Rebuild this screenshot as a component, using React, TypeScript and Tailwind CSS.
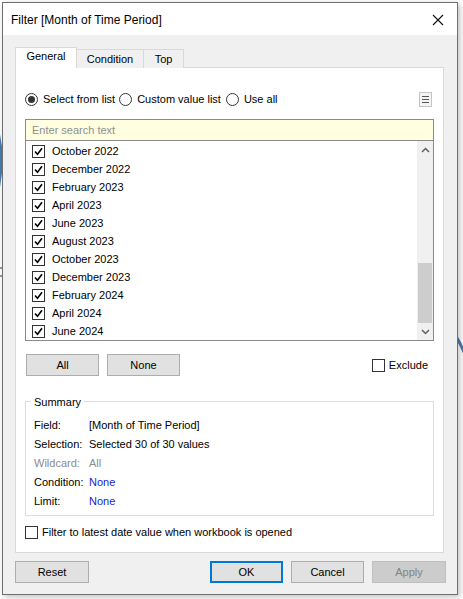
import React from "react";

const FONT = { fontFamily: '"Segoe UI", "Liberation Sans", Arial, sans-serif' };

function Check({ checked }: { checked: boolean }) {
  return (
    <span className="w-[13px] h-[13px] border border-[#333333] bg-white flex items-center justify-center shrink-0">
      {checked && (
        <svg width="11" height="11" viewBox="0 0 11 11">
          <path d="M2 5.5 L4.5 8.2 L9 2.3" fill="none" stroke="#000" strokeWidth="1.6" />
        </svg>
      )}
    </span>
  );
}

function Radio({ checked }: { checked: boolean }) {
  return (
    <span className="w-[13px] h-[13px] rounded-full border border-[#333333] bg-white flex items-center justify-center shrink-0">
      {checked && <span className="w-[7px] h-[7px] rounded-full bg-[#333333]" />}
    </span>
  );
}

const months = [
  "October 2022",
  "December 2022",
  "February 2023",
  "April 2023",
  "June 2023",
  "August 2023",
  "October 2023",
  "December 2023",
  "February 2024",
  "April 2024",
  "June 2024",
];

function Btn({ children, w, variant }: { children: React.ReactNode; w: string; variant?: "ok" | "disabled" }) {
  const cls =
    variant === "ok"
      ? "border-[#0078d7] bg-[#e1e1e1] text-black border-2"
      : variant === "disabled"
      ? "border-[#bfbfbf] bg-[#cccccc] text-[#838383] border"
      : "border-[#adadad] bg-[#e1e1e1] text-black border";
  return (
    <div className={`h-[22px] ${w} ${cls} flex items-center justify-center text-[11px]`}>{children}</div>
  );
}

export default function App() {
  return (
    <div className="w-[463px] h-[599px] bg-white relative overflow-hidden" style={FONT}>
      <svg className="absolute inset-0" width="463" height="599" viewBox="0 0 463 599">
        <path d="M-6 120 Q 6 150 -2 190" fill="none" stroke="#4a7bb0" strokeWidth="3" />
        <path d="M0 268 L3 268 L3 276 L0 276" fill="none" stroke="#333" strokeWidth="1" />
        <path d="M457 338 Q 464 350 470 368" fill="none" stroke="#4a7bb0" strokeWidth="3" />
      </svg>
      <div className="relative ml-[2px] mt-[2px] w-[456px] h-[593px] border border-[#6f6f6f] bg-[#f0f0f0] flex flex-col shadow-[2px_2px_6px_rgba(0,0,0,0.25)]">
        {/* title bar */}
        <div className="h-[32px] bg-white flex items-center justify-between pl-[8px] pr-[8px] pt-[1px] shrink-0">
          <span className="text-[12px] text-black">Filter [Month of Time Period]</span>
          <svg width="12" height="12" viewBox="0 0 12 12" className="mr-[5px]">
            <path d="M1 1 L11 11 M11 1 L1 11" stroke="#111" strokeWidth="1.1" />
          </svg>
        </div>
        {/* body */}
        <div className="pl-[12px] pr-[13px] pt-[12px] flex flex-col">
          {/* tabs */}
          <div className="flex items-end h-[21px] relative z-10 text-[11px]">
            <div className="w-[62px] h-[21px] bg-white border border-b-0 border-[#d9d9d9] flex items-center justify-center pb-[3px]">
              General
            </div>
            <div className="w-[67px] h-[19px] bg-[#f0f0f0] border border-l-0 border-[#d9d9d9] border-b-0 flex items-center justify-center">
              Condition
            </div>
            <div className="w-[40px] h-[19px] bg-[#f0f0f0] border border-l-0 border-[#d9d9d9] border-b-0 flex items-center justify-center">
              Top
            </div>
          </div>
          {/* panel */}
          <div className="-mt-px h-[486px] bg-white border border-[#d9d9d9] flex flex-col px-[9px] text-[11px] text-black">
            {/* radio row */}
            <div className="mt-[23px] h-[16px] flex items-center">
              <div className="flex items-center">
                <Radio checked />
                <span className="ml-[5px]">Select from list</span>
              </div>
              <div className="flex items-center ml-[4px]">
                <Radio checked={false} />
                <span className="ml-[5px]">Custom value list</span>
              </div>
              <div className="flex items-center ml-[5px]">
                <Radio checked={false} />
                <span className="ml-[5px]">Use all</span>
              </div>
              <div className="ml-auto mr-[2px] w-[13px] h-[15px] border border-[#c4c4c4] bg-[#f4f4f4] flex flex-col items-center justify-center gap-[2px]">
                <span className="w-[7px] h-[1px] bg-[#555]" />
                <span className="w-[7px] h-[1px] bg-[#555]" />
                <span className="w-[7px] h-[1px] bg-[#555]" />
              </div>
            </div>
            {/* search + list */}
            <div className="mt-[12px] h-[222px] border border-[#8a8a8a] flex flex-col">
              <div className="h-[21px] bg-[#fffee0] border-b border-[#8a8a8a] flex items-center pl-[6px] text-[#8f8f8f] shrink-0">
                Enter search text
              </div>
              <div className="flex flex-1">
                <div className="flex-1 flex flex-col pt-[1px]">
                  {months.map((m) => (
                    <div key={m} className="h-[18px] flex items-center pl-[6px]">
                      <Check checked />
                      <span className="ml-[7px]">{m}</span>
                    </div>
                  ))}
                </div>
                <div className="w-[16px] bg-[#f0f0f0] flex flex-col">
                  <div className="h-[17px] flex items-center justify-center">
                    <svg width="9" height="6" viewBox="0 0 9 6">
                      <path d="M1 5 L4.5 1.5 L8 5" fill="none" stroke="#606060" strokeWidth="1.5" />
                    </svg>
                  </div>
                  <div className="flex-1 flex flex-col justify-end">
                    <div className="h-[60px] bg-[#cdcdcd] mx-[1px]" />
                  </div>
                  <div className="h-[17px] flex items-center justify-center">
                    <svg width="9" height="6" viewBox="0 0 9 6">
                      <path d="M1 1 L4.5 4.5 L8 1" fill="none" stroke="#606060" strokeWidth="1.5" />
                    </svg>
                  </div>
                </div>
              </div>
            </div>
            {/* All / None / Exclude */}
            <div className="mt-[13px] h-[22px] flex items-center">
              <div className="ml-[1px]">
                <Btn w="w-[73px]">All</Btn>
              </div>
              <div className="ml-[8px]">
                <Btn w="w-[73px]">None</Btn>
              </div>
              <div className="ml-auto mr-[6px] flex items-center">
                <Check checked={false} />
                <span className="ml-[4px]">Exclude</span>
              </div>
            </div>
            {/* summary group */}
            <div className="mt-[25px] h-[115px] border border-[#dcdcdc] relative pl-[8px] pt-[14px]">
              <span className="absolute -top-[8px] left-[5px] bg-white px-[3px]">Summary</span>
              {[
                ["Field:", "[Month of Time Period]", "text-black", "text-black"],
                ["Selection:", "Selected 30 of 30 values", "text-black", "text-black"],
                ["Wildcard:", "All", "text-[#8c8c8c]", "text-[#8c8c8c]"],
                ["Condition:", "None", "text-black", "text-[#1a1ad6]"],
                ["Limit:", "None", "text-black", "text-[#1a1ad6]"],
              ].map(([l, v, lc, vc]) => (
                <div key={l} className="h-[19px] flex items-center">
                  <span className={`w-[55px] ${lc}`}>{l}</span>
                  <span className={vc}>{v}</span>
                </div>
              ))}
            </div>
            {/* latest date */}
            <div className="mt-[9px] h-[14px] flex items-center">
              <Check checked={false} />
              <span className="ml-[4px]">Filter to latest date value when workbook is opened</span>
            </div>
          </div>
          {/* bottom buttons */}
          <div className="mt-[8px] flex items-center">
            <Btn w="w-[74px]">Reset</Btn>
            <div className="ml-auto flex items-center gap-[8px] -mr-[2px]">
              <Btn w="w-[73px]" variant="ok">OK</Btn>
              <Btn w="w-[73px]">Cancel</Btn>
              <Btn w="w-[74px]" variant="disabled">Apply</Btn>
            </div>
          </div>
        </div>
      </div>
    </div>
  );
}
